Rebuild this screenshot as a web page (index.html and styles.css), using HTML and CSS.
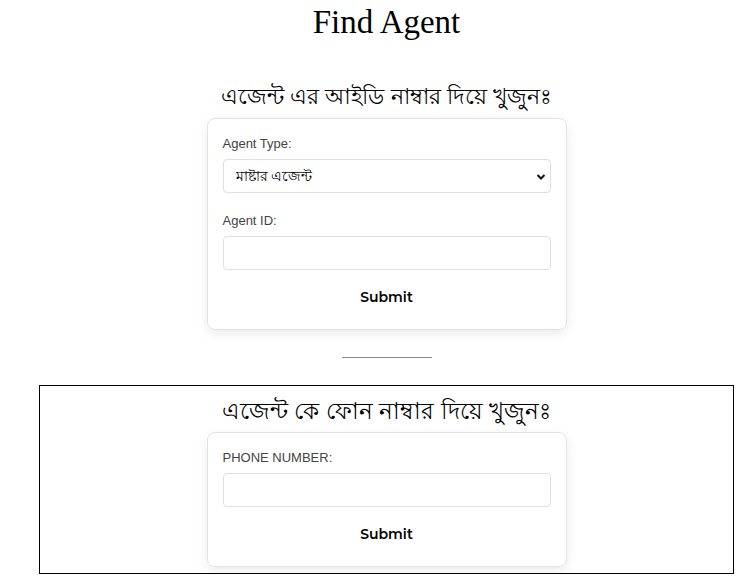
FILE: index.html
```html
<!DOCTYPE html>
<html lang="bn">
<head>
    <meta charset="UTF-8">
    <meta name="viewport" content="width=device-width, initial-scale=1.0">
    <title>Find Agent</title>
    <link rel="stylesheet" href="styles.css">
</head>
<body>
    <div class="page">
        <h1 class="title">Find Agent</h1>

        <!-- আইডি দিয়ে খোঁজা -->
        <section class="search">
            <h2 class="search-title">এজেন্ট এর আইডি নাম্বার দিয়ে খুজুনঃ</h2>
            <form class="card">
                <label for="agentType">Agent Type:</label>
                <div class="select-wrap">
                    <select id="agentType">
                        <option>মাষ্টার এজেন্ট</option>
                        <option>এজেন্ট</option>
                    </select>
                    <svg class="chevron" width="10" height="8" viewBox="0 0 10 8"><path d="M1.5 2 L5 5.5 L8.5 2" fill="none" stroke="#111" stroke-width="2"/></svg>
                </div>
                <label for="agentId">Agent ID:</label>
                <input type="text" id="agentId">
                <button type="button">Submit</button>
            </form>
        </section>

        <hr class="divider">

        <!-- ফোন নাম্বার দিয়ে খোঁজা -->
        <section class="search boxed">
            <h2 class="search-title">এজেন্ট কে ফোন নাম্বার দিয়ে খুজুনঃ</h2>
            <form class="card">
                <label for="phone">PHONE NUMBER:</label>
                <input type="text" id="phone">
                <button type="button">Submit</button>
            </form>
        </section>
    </div>
</body>
</html>
```

FILE: styles.css
```css
body {
    margin: 0;
    background: #fff;
    color: #000;
    font-family: "Liberation Sans", Arial, sans-serif;
}
.page {
    width: 695px;
    margin-left: 39px;
    display: flex;
    flex-direction: column;
    align-items: center;
}
.title {
    font-family: "Liberation Serif", "Times New Roman", serif;
    font-weight: normal;
    font-size: 33px;
    margin: 2px 0 0;
    line-height: 40px;
}
.search {
    width: 100%;
    display: flex;
    flex-direction: column;
    align-items: center;
}
.search-title {
    font-weight: normal;
    font-size: 23px;
    margin: 36px 0 0;
    line-height: 38px;
}
.search:first-child .search-title,
.title + .search .search-title {
    font-size: 22px;
}
.card {
    width: 360px;
    box-sizing: border-box;
    margin-top: 2px;
    padding: 17px 15px 7px;
    border: 1px solid #e3e3e3;
    border-radius: 8px;
    box-shadow: 0 4px 12px rgba(0, 0, 0, 0.08);
    display: flex;
    flex-direction: column;
}
.card label {
    font-size: 13px;
    color: #444;
    line-height: 15px;
    margin-bottom: 8px;
}
.select-wrap {
    position: relative;
    margin-bottom: 20px;
}
.chevron {
    position: absolute;
    right: 5px;
    top: 14px;
    pointer-events: none;
}
select,
input {
    display: block;
    width: 100%;
    height: 34px;
    box-sizing: border-box;
    border: 1px solid #e0e0e0;
    border-radius: 4px;
    background: #fff;
    font-size: 13.5px;
    padding: 0 12px;
    margin: 0;
    appearance: none;
}
input {
    margin-bottom: 18px;
}
select {
    color: #000;
}
button {
    align-self: center;
    border: none;
    background: none;
    font-family: "Montserrat", "Inter", sans-serif;
    font-weight: 600;
    font-size: 14px;
    padding: 0;
    margin: 0 0 16px;
    line-height: 18px;
    cursor: pointer;
}
.divider {
    width: 90px;
    margin: 27px 0 27px;
    border: none;
    border-top: 1px solid #888;
}
.boxed {
    border: 1px solid #000;
    box-sizing: border-box;
    height: 189px;
}
.boxed .search-title {
    margin-top: 6px;
}
```
